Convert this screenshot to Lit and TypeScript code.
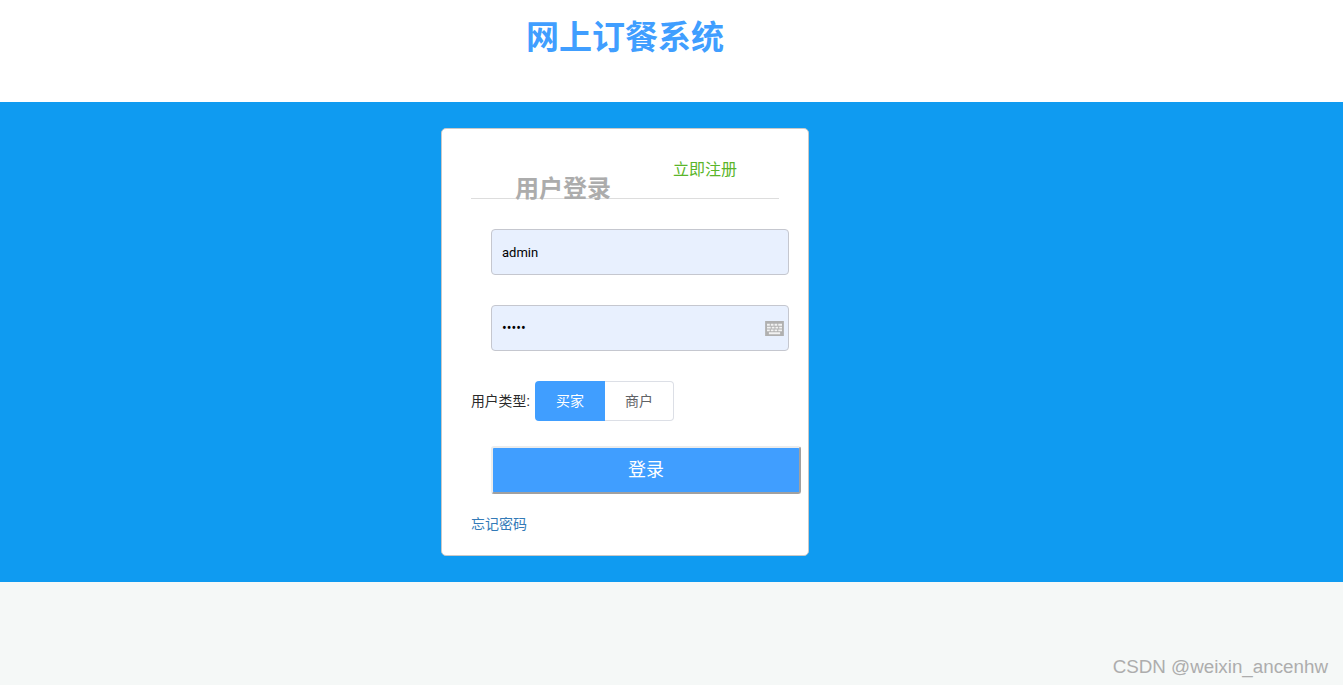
import { LitElement, html, css } from "lit";
import { customElement } from "lit/decorators.js";

@customElement("app-root")
export class AppRoot extends LitElement {
  static styles = css`
    :host {
      display: flex;
      flex-direction: column;
      position: relative;
      height: 685px;
      background: #f5f8f7;
      font-family: "Liberation Sans", "Noto Sans CJK SC", sans-serif;
      overflow: hidden;
    }
    * { box-sizing: border-box; }
    .top {
      height: 102px;
      background: #fff;
      padding: 18px 0 0 526px;
      flex: none;
    }
    h1 {
      margin: 0;
      font-size: 33px;
      line-height: 40px;
      font-weight: 700;
      color: #409eff;
    }
    .band {
      height: 480px;
      flex: none;
      background: #0f9bf1;
      padding: 26px 0 0 441px;
    }
    .card {
      width: 368px;
      height: 428px;
      background: #fff;
      border: 1px solid #c8c8c8;
      border-radius: 5px;
      padding: 0 29px;
    }
    .head {
      height: 70px;
      width: 308px;
      padding-top: 31px;
      border-bottom: 1px solid #ddd;
    }
    .reg {
      display: block;
      padding-left: 202px;
      font-size: 16px;
      line-height: 20px;
      color: #5ab52a;
      text-decoration: none;
    }
    h2 {
      margin: -3px 0 0;
      padding-left: 44px;
      font-size: 24px;
      line-height: 24px;
      font-weight: 700;
      color: #acacac;
    }
    .field {
      position: relative;
      margin: 30px 0 0 20px;
      width: 298px;
      height: 46px;
    }
    input {
      display: block;
      width: 100%;
      height: 100%;
      padding: 0 10px;
      border: 1px solid #c5c7cf;
      border-radius: 4px;
      background: #e8f0fe;
      color: #000;
      font: 13px Roboto, "Liberation Sans", sans-serif;
      outline: none;
    }
    input.pw {
      font-size: 14px;
    }
    .kbd {
      position: absolute;
      right: 5px;
      top: 16px;
      width: 19px;
      height: 15px;
      display: block;
    }
    .type {
      display: flex;
      align-items: center;
      margin-top: 30px;
      height: 40px;
    }
    .label {
      width: 64px;
      font-size: 13.8px;
      line-height: 20px;
      padding-top: 2px;
      color: #2a2a2a;
      white-space: nowrap;
    }
    .seg {
      height: 40px;
      display: flex;
      align-items: center;
      justify-content: center;
      font-size: 14px;
      padding-bottom: 3px;
    }
    .buyer {
      width: 70px;
      background: #409eff;
      color: #fff;
      border-radius: 4px 0 0 4px;
    }
    .seller {
      width: 69px;
      background: #fff;
      color: #606266;
      border: 1px solid #dcdfe6;
      border-left: none;
      border-radius: 0 4px 4px 0;
    }
    .login {
      display: block;
      margin: 25px 0 0 20px;
      width: 310px;
      height: 48px;
      background: #409eff;
      color: #fff;
      border: 2px solid;
      border-color: #ececec #a0a0a0 #a0a0a0 #ececec;
      border-radius: 3px;
      font: 18px "Liberation Sans", "Noto Sans CJK SC", sans-serif;
      padding: 0 0 4px;
    }
    .forgot {
      display: block;
      margin-top: 20px;
      font-size: 14px;
      line-height: 20px;
      color: #337ab7;
      text-decoration: none;
    }
    .mark {
      position: absolute;
      right: 15px;
      bottom: 7px;
      font-size: 18.8px;
      line-height: 22px;
      color: #adadad;
    }
  `;

  render() {
    return html`
      <div class="top"><h1>网上订餐系统</h1></div>
      <div class="band">
        <div class="card">
          <div class="head">
            <a class="reg" href="#">立即注册</a>
            <h2>用户登录</h2>
          </div>
          <div class="field"><input type="text" value="admin" /></div>
          <div class="field">
            <input class="pw" type="password" value="admin" />
            <svg class="kbd" viewBox="0 0 20 16" aria-hidden="true">
              <rect width="20" height="16" fill="#b0b0b0" />
              <path
                d="M2 3h3v2H2zM6 3h3v2H6zM10 3h3v2h-3zM14 3h4v2h-4zM2 6h4v2H2zM7 6h3v2H7zM11 6h3v2h-3zM15 6h3v2h-3zM2 9h3v2H2zM6 9h3v2H6zM10 9h3v2h-3zM14 9h4v2h-4zM4 12h12v2H4z"
                fill="#f2f2f2"
              />
            </svg>
          </div>
          <div class="type">
            <span class="label">用户类型:</span>
            <span class="seg buyer">买家</span>
            <span class="seg seller">商户</span>
          </div>
          <button class="login">登录</button>
          <a class="forgot" href="#">忘记密码</a>
        </div>
      </div>
      <div class="mark">CSDN @weixin_ancenhw</div>
    `;
  }
}
